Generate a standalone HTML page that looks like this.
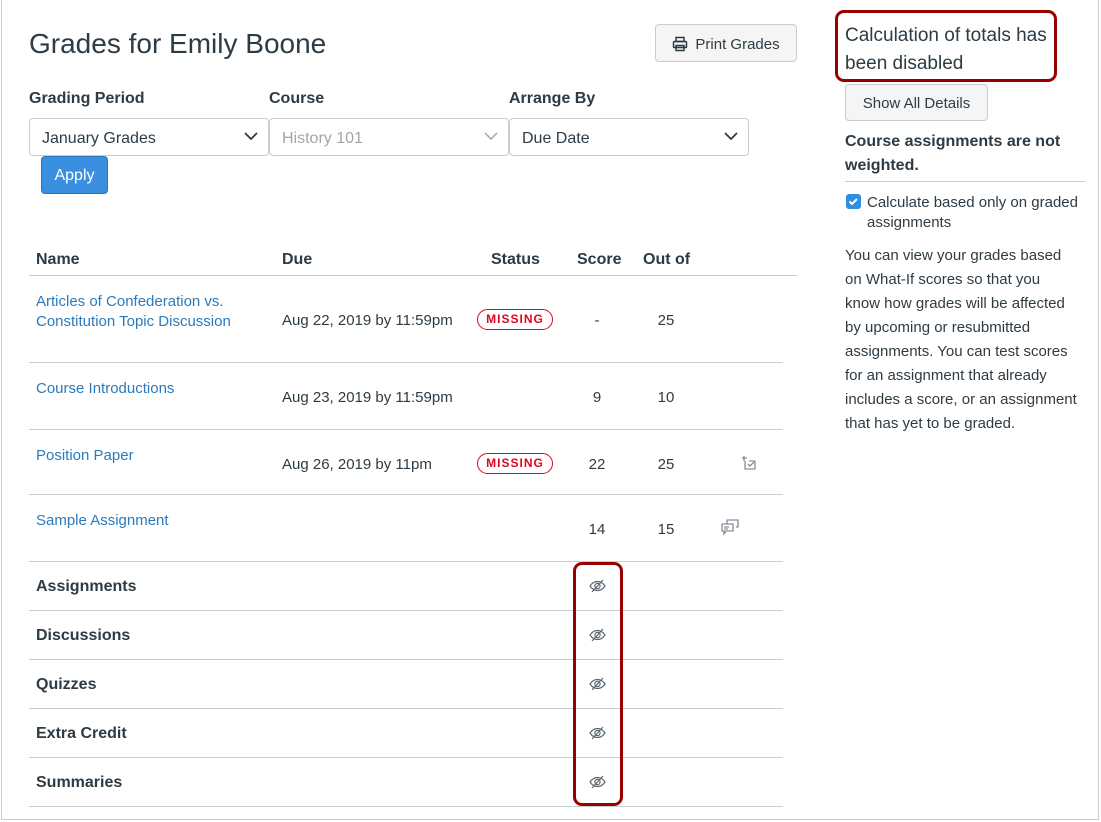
<!DOCTYPE html>
<html><head><style>
*{box-sizing:border-box;margin:0;padding:0}
body{width:1101px;height:822px;background:#fff;font-family:"Liberation Sans",sans-serif;color:#2d3b45;position:relative;overflow:hidden}
.frame{position:absolute;left:1px;top:0;width:1098px;height:820px;border:1px solid #c7cdd1;border-top:none}
.a{position:absolute;white-space:nowrap}
h1{position:absolute;left:29px;top:28px;font-size:28px;font-weight:normal}
.btn{position:absolute;background:#f5f5f5;border:1px solid #c7cdd1;border-radius:4px;font-size:15px;display:flex;align-items:center;justify-content:center;color:#2d3b45;padding-top:2px}
.lbl{position:absolute;top:90px;font-size:16px;font-weight:bold}
.sel{position:absolute;top:118px;height:38px;width:240px;border:1px solid #c7cdd1;border-radius:4px;font-size:16px;padding:11px 12px}
.sel svg{position:absolute;right:10px;top:12px}
.line{position:absolute;height:1px;background:#c7cdd1}
.lnk{color:#2b7abc;font-size:15px;line-height:20px}
.miss{position:absolute;width:76px;height:21px;border:1px solid #e0061f;border-radius:11px;color:#e0061f;font-size:12px;font-weight:bold;letter-spacing:1px;text-align:center;line-height:19px}
.num{position:absolute;font-size:15px;text-align:center;width:40px}
.cat{position:absolute;left:36px;font-size:16px;font-weight:bold}
.eye{position:absolute;left:589px}
</style></head><body>
<div class="frame"></div>
<h1>Grades for Emily Boone</h1>
<div class="btn" style="left:655px;top:24px;width:142px;height:38px"><svg width="16" height="16" viewBox="0 0 16 16" style="margin-right:7px" fill="none" stroke="#2d3b45" stroke-width="1.5"><rect x="4" y="1.5" width="8" height="4"/><rect x="1.5" y="5.5" width="13" height="6" rx="1"/><rect x="4" y="9.5" width="8" height="5"/></svg>Print Grades</div>
<div class="lbl" style="left:29px">Grading Period</div>
<div class="lbl" style="left:269px">Course</div>
<div class="lbl" style="left:509px">Arrange By</div>
<div class="sel" style="left:29px">January Grades<svg width="14" height="10"><path d="M1 2l6 6 6-6" fill="none" stroke="#2d3b45" stroke-width="1.8"/></svg></div>
<div class="sel" style="left:269px;color:#a0a6ab">History 101<svg width="14" height="10"><path d="M1 2l6 6 6-6" fill="none" stroke="#a0a6ab" stroke-width="1.5"/></svg></div>
<div class="sel" style="left:509px">Due Date<svg width="14" height="10"><path d="M1 2l6 6 6-6" fill="none" stroke="#2d3b45" stroke-width="1.8"/></svg></div>
<div class="btn" style="left:41px;top:156px;width:67px;height:38px;background:#3a8fe0;border-color:#2a73c0;color:#fff;font-size:16px">Apply</div>

<div class="a" style="left:36px;top:251px;font-size:16px;font-weight:bold">Name</div>
<div class="a" style="left:282px;top:251px;font-size:16px;font-weight:bold">Due</div>
<div class="a" style="left:491px;top:251px;font-size:16px;font-weight:bold">Status</div>
<div class="a" style="left:577px;top:251px;font-size:16px;font-weight:bold">Score</div>
<div class="a" style="left:643px;top:251px;font-size:16px;font-weight:bold">Out of</div>
<div class="line" style="left:29px;top:275px;width:768px"></div>

<div class="a lnk" style="left:36px;top:292px">Articles of Confederation vs.<br>Constitution Topic Discussion</div>
<div class="a" style="left:282px;top:312px;font-size:15px">Aug 22, 2019 by 11:59pm</div>
<div class="miss" style="left:477px;top:309px">MISSING</div>
<div class="num" style="left:577px;top:312px">-</div>
<div class="num" style="left:646px;top:312px">25</div>
<div class="line" style="left:29px;top:362px;width:754px"></div>

<div class="a lnk" style="left:36px;top:379px">Course Introductions</div>
<div class="a" style="left:282px;top:389px;font-size:15px">Aug 23, 2019 by 11:59pm</div>
<div class="num" style="left:577px;top:389px">9</div>
<div class="num" style="left:646px;top:389px">10</div>
<div class="line" style="left:29px;top:429px;width:754px"></div>

<div class="a lnk" style="left:36px;top:446px">Position Paper</div>
<div class="a" style="left:282px;top:456px;font-size:15px">Aug 26, 2019 by 11pm</div>
<div class="miss" style="left:477px;top:453px">MISSING</div>
<div class="num" style="left:577px;top:456px">22</div>
<div class="num" style="left:646px;top:456px">25</div>
<svg class="a" style="left:741px;top:455px" width="16" height="16" viewBox="0 0 16 16" fill="none" stroke="#6b7780" stroke-width="1.1"><path d="M3 1v5M1 3h5M4 6v8h10V6H8M7 9l2 2 4-4"/></svg>
<div class="line" style="left:29px;top:494px;width:754px"></div>

<div class="a lnk" style="left:36px;top:511px">Sample Assignment</div>
<div class="num" style="left:577px;top:521px">14</div>
<div class="num" style="left:646px;top:521px">15</div>
<svg class="a" style="left:721px;top:519px" width="18" height="17" viewBox="0 0 18 17" fill="none" stroke="#6b7780" stroke-width="1.1"><path d="M6 5V1h11v7h-2M1 5h11v7H5l-2 3v-3H1zM3 8h5M3 10h4"/></svg>
<div class="line" style="left:29px;top:561px;width:754px"></div>

<div class="cat" style="top:578px">Assignments</div>
<div class="line" style="left:29px;top:610px;width:754px"></div>
<div class="cat" style="top:627px">Discussions</div>
<div class="line" style="left:29px;top:659px;width:754px"></div>
<div class="cat" style="top:676px">Quizzes</div>
<div class="line" style="left:29px;top:708px;width:754px"></div>
<div class="cat" style="top:725px">Extra Credit</div>
<div class="line" style="left:29px;top:757px;width:754px"></div>
<div class="cat" style="top:774px">Summaries</div>
<div class="line" style="left:29px;top:806px;width:754px"></div>

<svg class="eye" style="top:578px" width="17" height="16" viewBox="0 0 17 16" fill="none" stroke="#5c6770" stroke-width="1.2"><path d="M1 8c2-3 4.5-4.5 7.5-4.5S14 5 16 8c-2 3-4.5 4.5-7.5 4.5S3 11 1 8z"/><circle cx="8.5" cy="8" r="2.6"/><path d="M3 14L14 2"/></svg>
<svg class="eye" style="top:627px" width="17" height="16" viewBox="0 0 17 16" fill="none" stroke="#5c6770" stroke-width="1.2"><path d="M1 8c2-3 4.5-4.5 7.5-4.5S14 5 16 8c-2 3-4.5 4.5-7.5 4.5S3 11 1 8z"/><circle cx="8.5" cy="8" r="2.6"/><path d="M3 14L14 2"/></svg>
<svg class="eye" style="top:676px" width="17" height="16" viewBox="0 0 17 16" fill="none" stroke="#5c6770" stroke-width="1.2"><path d="M1 8c2-3 4.5-4.5 7.5-4.5S14 5 16 8c-2 3-4.5 4.5-7.5 4.5S3 11 1 8z"/><circle cx="8.5" cy="8" r="2.6"/><path d="M3 14L14 2"/></svg>
<svg class="eye" style="top:725px" width="17" height="16" viewBox="0 0 17 16" fill="none" stroke="#5c6770" stroke-width="1.2"><path d="M1 8c2-3 4.5-4.5 7.5-4.5S14 5 16 8c-2 3-4.5 4.5-7.5 4.5S3 11 1 8z"/><circle cx="8.5" cy="8" r="2.6"/><path d="M3 14L14 2"/></svg>
<svg class="eye" style="top:774px" width="17" height="16" viewBox="0 0 17 16" fill="none" stroke="#5c6770" stroke-width="1.2"><path d="M1 8c2-3 4.5-4.5 7.5-4.5S14 5 16 8c-2 3-4.5 4.5-7.5 4.5S3 11 1 8z"/><circle cx="8.5" cy="8" r="2.6"/><path d="M3 14L14 2"/></svg>
<div class="a" style="left:573px;top:562px;width:50px;height:244px;border:3px solid #990000;border-radius:9px"></div>

<div class="a" style="left:835px;top:10px;width:222px;height:72px;border:3px solid #990000;border-radius:9px"></div>
<div class="a" style="left:845px;top:22px;font-size:19px;line-height:28px">Calculation of totals has<br>been disabled</div>
<div class="btn" style="left:845px;top:84px;width:143px;height:37px">Show All Details</div>
<div class="a" style="left:845px;top:130px;font-size:16px;font-weight:bold;line-height:24px">Course assignments are not<br>weighted.</div>
<div class="line" style="left:845px;top:181px;width:240px"></div>
<div class="a" style="left:846px;top:194px;width:15px;height:15px;background:#2d8ee3;border-radius:3px"><svg width="15" height="15"><path d="M3.5 7.5l2.5 2.5 5-5" fill="none" stroke="#fff" stroke-width="2"/></svg></div>
<div class="a" style="left:867px;top:193px;font-size:15px;line-height:20px">Calculate based only on graded<br>assignments</div>
<div class="a" style="left:845px;top:244px;font-size:15px;line-height:24px">You can view your grades based<br>on What-If scores so that you<br>know how grades will be affected<br>by upcoming or resubmitted<br>assignments. You can test scores<br>for an assignment that already<br>includes a score, or an assignment<br>that has yet to be graded.</div>
</body></html>
